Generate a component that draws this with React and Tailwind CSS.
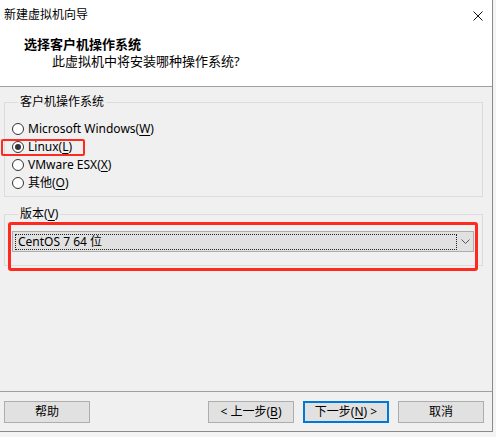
const FONT = { fontFamily: '"Noto Sans", "Noto Sans CJK SC", sans-serif' };

function Mn({ children }) {
  return <span className="underline underline-offset-[2px]">{children}</span>;
}

function Radio({ checked, children, highlight }) {
  return (
    <div className="relative h-[18px] flex items-center gap-[4px]">
      <span className="w-[12px] h-[12px] rounded-full border border-[#333] bg-white flex items-center justify-center">
        {checked && <span className="w-[6px] h-[6px] rounded-full bg-[#333]" />}
      </span>
      <span className="text-[12px] leading-[14px] text-black">{children}</span>
      {highlight && (
        <div className="absolute left-[-11px] top-[1px] w-[84px] h-[17px] border-2 border-[#ff2a1f] rounded-[2px]" />
      )}
    </div>
  );
}

function Btn({ children, focused, className = '' }) {
  return (
    <button
      className={`h-[22px] w-[86px] bg-[#e1e1e1] text-[12px] leading-[14px] text-black flex items-center justify-center ${
        focused ? 'border-2 border-[#0078d7]' : 'border border-[#adadad]'
      } ${className}`}
    >
      {children}
    </button>
  );
}

export default function App() {
  return (
    <div className="w-[496px] h-[437px] bg-[#f4f4f4] overflow-hidden" style={FONT}>
      <div className="w-[493px] h-[432px] bg-[#f0f0f0] border-r border-b border-[#8a8a8a] flex flex-col">
        {/* Title + header */}
        <div className="h-[87px] bg-white border-b border-[#a0a0a0] shrink-0">
          <div className="h-[30px] flex items-center justify-between pl-[4px] pr-[9px]">
            <span className="text-[12px] text-black">新建虚拟机向导</span>
            <svg width="10" height="10" viewBox="0 0 10 10" className="mt-[1px]">
              <path d="M0.5 0.5 L9.5 9.5 M9.5 0.5 L0.5 9.5" stroke="#111" strokeWidth="1" />
            </svg>
          </div>
          <div className="pt-[6px]">
            <div className="pl-[24px] text-[13px] leading-[17px] font-bold text-black">选择客户机操作系统</div>
            <div className="pl-[52px] text-[13px] leading-[17px] text-black">此虚拟机中将安装哪种操作系统?</div>
          </div>
        </div>

        {/* Guest OS group */}
        <fieldset className="mt-[8px] ml-[4px] mr-[9px] border border-[#dcdcdc] pl-[7px] pb-[4px]">
          <legend className="ml-[6px] px-[2px] text-[12px] leading-[14px] text-black">客户机操作系统</legend>
          <div className="pt-[11px]">
            <Radio>Microsoft Windows(<Mn>W</Mn>)</Radio>
            <Radio checked highlight>Linux(<Mn>L</Mn>)</Radio>
            <Radio>VMware ESX(<Mn>X</Mn>)</Radio>
            <Radio>其他(<Mn>O</Mn>)</Radio>
          </div>
        </fieldset>

        {/* Version group */}
        <fieldset className="mt-[10px] ml-[4px] mr-[9px] border border-[#dcdcdc] pl-[7px] pr-[8px] pb-[13px]">
          <legend className="ml-[6px] px-[2px] text-[12px] leading-[14px] text-black">
            版本(<Mn>V</Mn>)
          </legend>
          <div className="pt-[10px]">
            <div className="relative h-[21px] bg-[#e1e1e1] border border-[#adadad] flex items-center">
              <div className="ml-[2px] h-[16px] w-[442px] border border-dotted border-[#222] flex items-center pl-[2px]">
                <span className="text-[12px] leading-[14px] text-black">CentOS 7 64 位</span>
              </div>
              <div className="flex-1 flex items-center justify-center">
                <svg width="9" height="5" viewBox="0 0 9 5">
                  <path d="M0.5 0.5 L4.5 4.5 L8.5 0.5" stroke="#555" strokeWidth="1" fill="none" />
                </svg>
              </div>
              <div className="absolute left-[-5px] top-[-10px] right-[-5px] bottom-[-20px] border-[3px] border-[#ff2a1f] rounded-[3px]" />
            </div>
          </div>
        </fieldset>

        <div className="flex-1" />

        {/* Footer */}
        <div className="border-t border-[#a0a0a0] pt-[9px] pb-[8px] pl-[4px] pr-[8px] flex items-center">
          <Btn>帮助</Btn>
          <div className="flex-1" />
          <div className="flex gap-[9px]">
            <Btn>&lt; 上一步(<Mn>B</Mn>)</Btn>
            <Btn focused>下一步(<Mn>N</Mn>) &gt;</Btn>
            <Btn>取消</Btn>
          </div>
        </div>
      </div>
    </div>
  );
}
